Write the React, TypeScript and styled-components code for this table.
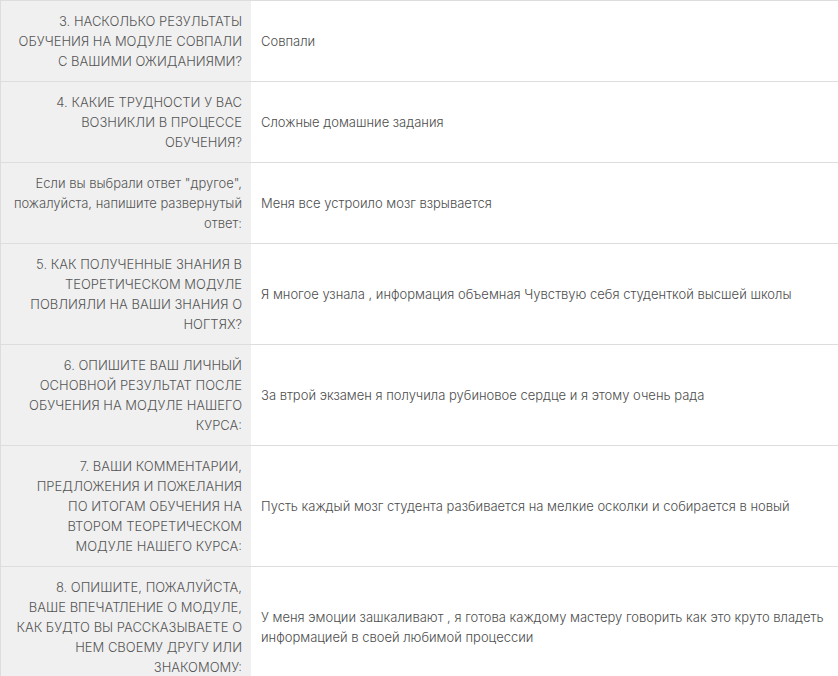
import styled, { createGlobalStyle } from "styled-components";

const GlobalStyle = createGlobalStyle`
  body {
    margin: 0;
    background: #ffffff;
    font-family: Inter, "Liberation Sans", Arial, sans-serif;
  }
`;

const Table = styled.table`
  width: 838px;
  border-collapse: collapse;
  border-top: 1px solid #dddddd;
  border-left: 1px solid #dddddd;
  font-size: 13px;
  font-weight: 300;
  line-height: 20px;
  color: #555555;
`;

const Row = styled.tr`
  border-bottom: 1px solid #dddddd;
`;

const Question = styled.th`
  width: 231px;
  padding: 10px 9px 10px 10px;
  background: #f0f0f0;
  text-align: right;
  font-weight: 300;
  vertical-align: middle;
  white-space: pre-line;
`;

const Answer = styled.td`
  padding: 10px 10px 10px 10px;
  text-align: left;
  vertical-align: middle;
  color: #4d4d4d;
`;

type Item = { q: string; a: string };

const items: Item[] = [
  {
    q: "3. НАСКОЛЬКО РЕЗУЛЬТАТЫ\nОБУЧЕНИЯ НА МОДУЛЕ СОВПАЛИ\nС ВАШИМИ ОЖИДАНИЯМИ?",
    a: "Совпали",
  },
  {
    q: "4. КАКИЕ ТРУДНОСТИ У ВАС\nВОЗНИКЛИ В ПРОЦЕССЕ\nОБУЧЕНИЯ?",
    a: "Сложные домашние задания",
  },
  {
    q: "Если вы выбрали ответ \"другое\",\nпожалуйста, напишите развернутый\nответ:",
    a: "Меня все устроило мозг взрывается",
  },
  {
    q: "5. КАК ПОЛУЧЕННЫЕ ЗНАНИЯ В\nТЕОРЕТИЧЕСКОМ МОДУЛЕ\nПОВЛИЯЛИ НА ВАШИ ЗНАНИЯ О\nНОГТЯХ?",
    a: "Я многое узнала , информация объемная Чувствую себя студенткой высшей школы",
  },
  {
    q: "6. ОПИШИТЕ ВАШ ЛИЧНЫЙ\nОСНОВНОЙ РЕЗУЛЬТАТ ПОСЛЕ\nОБУЧЕНИЯ НА МОДУЛЕ НАШЕГО\nКУРСА:",
    a: "За втрой экзамен я получила рубиновое сердце и я этому очень рада",
  },
  {
    q: "7. ВАШИ КОММЕНТАРИИ,\nПРЕДЛОЖЕНИЯ И ПОЖЕЛАНИЯ\nПО ИТОГАМ ОБУЧЕНИЯ НА\nВТОРОМ ТЕОРЕТИЧЕСКОМ\nМОДУЛЕ НАШЕГО КУРСА:",
    a: "Пусть каждый мозг студента разбивается на мелкие осколки и собирается в новый",
  },
  {
    q: "8. ОПИШИТЕ, ПОЖАЛУЙСТА,\nВАШЕ ВПЕЧАТЛЕНИЕ О МОДУЛЕ,\nКАК БУДТО ВЫ РАССКАЗЫВАЕТЕ О\nНЕМ СВОЕМУ ДРУГУ ИЛИ\nЗНАКОМОМУ:",
    a: "У меня эмоции зашкаливают , я готова каждому мастеру говорить как это круто владеть информацией в своей любимой процессии",
  },
];

export default function App() {
  return (
    <>
      <GlobalStyle />
      <Table>
        <tbody>
          {items.map((item, i) => (
            <Row key={i}>
              <Question>{item.q}</Question>
              <Answer>{item.a}</Answer>
            </Row>
          ))}
        </tbody>
      </Table>
    </>
  );
}
